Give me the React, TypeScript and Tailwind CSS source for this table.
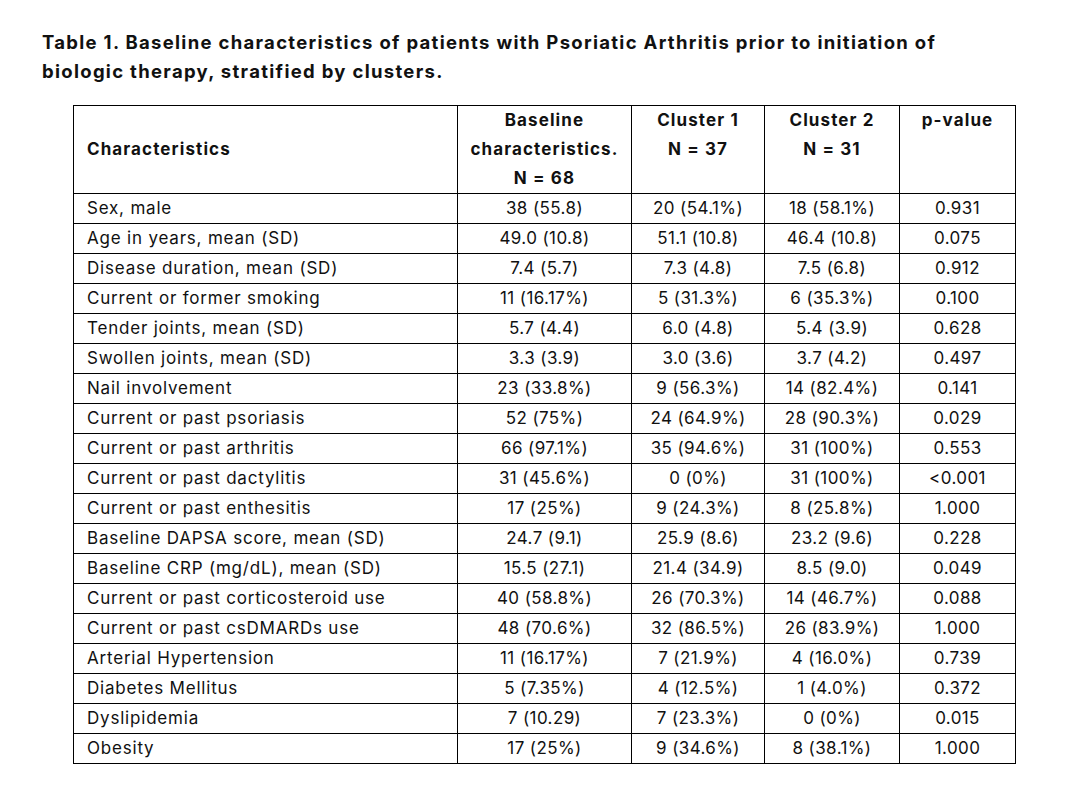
const rows: [string, string, string, string, string][] = [
  ["Sex, male", "38 (55.8)", "20 (54.1%)", "18 (58.1%)", "0.931"],
  ["Age in years, mean (SD)", "49.0 (10.8)", "51.1 (10.8)", "46.4 (10.8)", "0.075"],
  ["Disease duration, mean (SD)", "7.4 (5.7)", "7.3 (4.8)", "7.5 (6.8)", "0.912"],
  ["Current or former smoking", "11 (16.17%)", "5 (31.3%)", "6 (35.3%)", "0.100"],
  ["Tender joints, mean (SD)", "5.7 (4.4)", "6.0 (4.8)", "5.4 (3.9)", "0.628"],
  ["Swollen joints, mean (SD)", "3.3 (3.9)", "3.0 (3.6)", "3.7 (4.2)", "0.497"],
  ["Nail involvement", "23 (33.8%)", "9 (56.3%)", "14 (82.4%)", "0.141"],
  ["Current or past psoriasis", "52 (75%)", "24 (64.9%)", "28 (90.3%)", "0.029"],
  ["Current or past arthritis", "66 (97.1%)", "35 (94.6%)", "31 (100%)", "0.553"],
  ["Current or past dactylitis", "31 (45.6%)", "0 (0%)", "31 (100%)", "<0.001"],
  ["Current or past enthesitis", "17 (25%)", "9 (24.3%)", "8 (25.8%)", "1.000"],
  ["Baseline DAPSA score, mean (SD)", "24.7 (9.1)", "25.9 (8.6)", "23.2 (9.6)", "0.228"],
  ["Baseline CRP (mg/dL), mean (SD)", "15.5 (27.1)", "21.4 (34.9)", "8.5 (9.0)", "0.049"],
  ["Current or past corticosteroid use", "40 (58.8%)", "26 (70.3%)", "14 (46.7%)", "0.088"],
  ["Current or past csDMARDs use", "48 (70.6%)", "32 (86.5%)", "26 (83.9%)", "1.000"],
  ["Arterial Hypertension", "11 (16.17%)", "7 (21.9%)", "4 (16.0%)", "0.739"],
  ["Diabetes Mellitus", "5 (7.35%)", "4 (12.5%)", "1 (4.0%)", "0.372"],
  ["Dyslipidemia", "7 (10.29)", "7 (23.3%)", "0 (0%)", "0.015"],
  ["Obesity", "17 (25%)", "9 (34.6%)", "8 (38.1%)", "1.000"],
];

export default function App() {
  return (
    <div className="min-h-[807px] w-[1076px] bg-white pl-[42px] pt-[28px] text-[#111] font-['Inter','Liberation_Sans',sans-serif]">
      <h1 className="text-[18.5px] font-bold leading-[29px] tracking-[1.3px]">
        Table 1. Baseline characteristics of patients with Psoriatic Arthritis prior to initiation of
        <br />
        biologic therapy, stratified by clusters.
      </h1>

      <table className="ml-[31px] mt-[19px] w-[942px] table-fixed border-collapse text-[17px] tracking-[0.4px]">
        <colgroup>
          <col className="w-[384px]" />
          <col className="w-[174px]" />
          <col className="w-[133px]" />
          <col className="w-[135px]" />
          <col className="w-[116px]" />
        </colgroup>
        <thead>
          <tr className="h-[88px] font-bold leading-[29px] tracking-[1.1px]">
            <th className="border border-black pl-[13px] text-left align-middle">Characteristics</th>
            <th className="border border-black align-top">
              Baseline
              <br />
              characteristics.
              <br />N = 68
            </th>
            <th className="border border-black align-top">
              Cluster 1
              <br />N = 37
            </th>
            <th className="border border-black align-top">
              Cluster 2
              <br />N = 31
            </th>
            <th className="border border-black align-top">p-value</th>
          </tr>
        </thead>
        <tbody>
          {rows.map((r) => (
            <tr key={r[0]} className="h-[30px]">
              <td className="border border-black pl-[13px] text-left tracking-[0.8px]">{r[0]}</td>
              <td className="border border-black text-center">{r[1]}</td>
              <td className="border border-black text-center">{r[2]}</td>
              <td className="border border-black text-center">{r[3]}</td>
              <td className="border border-black text-center">{r[4]}</td>
            </tr>
          ))}
        </tbody>
      </table>
    </div>
  );
}
